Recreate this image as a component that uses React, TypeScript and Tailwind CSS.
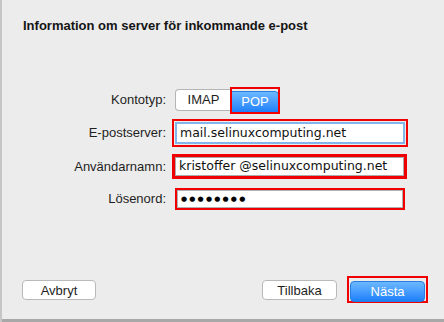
export default function App() {
  const label = "w-[164px] shrink-0 text-right text-[13px] text-[#1e1e1e]";
  const field = "text-[12.5px] text-[#111] [font-family:'DejaVu_Sans',sans-serif]";

  return (
    <div className="w-[444px] h-[322px] flex flex-col bg-[#ececec] border-l-2 border-[#c6c6c6] [font-family:'Liberation_Sans',Arial,sans-serif] overflow-hidden">
      {/* Title */}
      <h1 className="pt-[18px] pl-[21px] text-[13px] leading-[16px] font-bold text-[#151515]">
        Information om server för inkommande e-post
      </h1>

      {/* Kontotyp */}
      <div className="mt-[53px] h-[26px] flex items-center">
        <span className={label}>Kontotyp:</span>
        <div className="ml-[9px] flex h-[22px]">
          <button
            type="button"
            className="w-[56px] h-[22px] bg-white border border-[#b4b4b4] border-r-0 rounded-l-[4px] text-[13px] text-[#1e1e1e]"
          >
            IMAP
          </button>
          <div className="relative">
            <button
              type="button"
              className="w-[48px] h-[22px] rounded-r-[4px] bg-gradient-to-b from-[#6cb8ff] to-[#1b80fa] border border-[#2a7de0] text-[13px] text-white"
            >
              POP
            </button>
            <span className="absolute -left-[1px] -right-[1px] -top-[2px] -bottom-[3px] border-2 border-[#f00000]" />
          </div>
        </div>
      </div>

      {/* E-postserver */}
      <div className="mt-[6px] h-[28px] flex items-center">
        <span className={label}>E-postserver:</span>
        <div className="ml-[6px] w-[236px] h-[28px] border-2 border-[#f00000] p-[1px]">
          <div className="h-full border-2 border-[#83b4ea] bg-white flex items-center pl-[3px]">
            <span className={field}>mail.selinuxcomputing.net</span>
          </div>
        </div>
      </div>

      {/* Användarnamn */}
      <div className="mt-[7px] h-[25px] flex items-center">
        <span className={label}>Användarnamn:</span>
        <div className="ml-[6px] w-[235px] h-[25px] border-[3px] border-[#f00000]">
          <div className="h-full border border-[#a9a9a9] bg-white flex items-center pl-[3px]">
            <span className={field}>kristoffer @selinuxcomputing.net</span>
          </div>
        </div>
      </div>

      {/* Lösenord */}
      <div className="mt-[9px] h-[22px] flex items-center">
        <span className={label}>Lösenord:</span>
        <div className="ml-[9px] w-[230px] h-[22px] border-2 border-[#f00000]">
          <div className="h-full border border-[#b0b0b0] bg-white flex items-center pl-[3px]">
            <span className="text-[7px] leading-none tracking-[2.2px] text-black [font-family:'DejaVu_Sans',sans-serif]">
              ●●●●●●●●
            </span>
          </div>
        </div>
      </div>

      <div className="flex-1" />

      {/* Buttons */}
      <div className="mb-[16px] h-[27px] flex items-center pl-[20px]">
        <button
          type="button"
          className="w-[74px] h-[20px] bg-white border border-[#b9b9b9] rounded-[4px] text-[13px] text-[#1e1e1e]"
        >
          Avbryt
        </button>
        <div className="flex-1" />
        <button
          type="button"
          className="w-[75px] h-[20px] bg-white border border-[#b9b9b9] rounded-[4px] text-[13px] text-[#1e1e1e]"
        >
          Tillbaka
        </button>
        <div className="ml-[10px] mr-[16px] w-[81px] h-[27px] border-2 border-[#f00000] p-[1px]">
          <button
            type="button"
            className="w-full h-full rounded-[4px] bg-gradient-to-b from-[#6cb8ff] to-[#1b80fa] border border-[#2a7de0] text-[13px] text-white"
          >
            Nästa
          </button>
        </div>
      </div>

      <div className="h-[3px] bg-[#a8a8a8]" />
    </div>
  );
}
